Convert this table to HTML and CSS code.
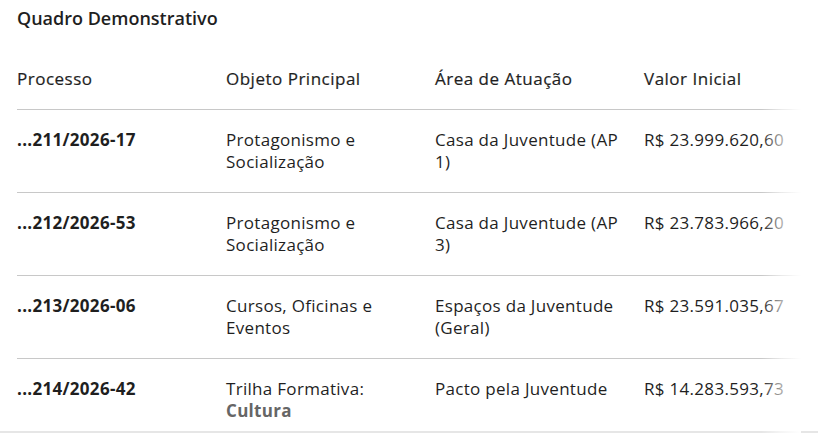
FILE: index.html
```html
<!DOCTYPE html>
<html lang="pt-BR">
<head>
<meta charset="UTF-8">
<title>Quadro Demonstrativo</title>
<link rel="stylesheet" href="styles.css">
</head>
<body>

<div class="page">
  <h3 class="title">Quadro Demonstrativo</h3>

  <div class="table-wrap">
    <table class="grid">
      <thead>
        <tr>
          <th class="c1">Processo</th>
          <th class="c2">Objeto Principal</th>
          <th class="c3">Área de Atuação</th>
          <th class="c4">Valor Inicial</th>
        </tr>
      </thead>
      <tbody>
        <tr>
          <td class="num">...211/2026-17</td>
          <td>Protagonismo e Socialização</td>
          <td>Casa da Juventude (AP 1)</td>
          <td>R$ 23.999.620,60</td>
        </tr>
        <tr>
          <td class="num">...212/2026-53</td>
          <td>Protagonismo e Socialização</td>
          <td>Casa da Juventude (AP 3)</td>
          <td>R$ 23.783.966,20</td>
        </tr>
        <tr>
          <td class="num">...213/2026-06</td>
          <td>Cursos, Oficinas e Eventos</td>
          <td>Espaços da Juventude (Geral)</td>
          <td>R$ 23.591.035,67</td>
        </tr>
        <tr>
          <td class="num">...214/2026-42</td>
          <td>Trilha Formativa: <b class="dim">Cultura</b></td>
          <td>Pacto pela Juventude</td>
          <td>R$ 14.283.593,73</td>
        </tr>
      </tbody>
    </table>
  </div>
</div>

</body>
</html>
```

FILE: styles.css
```css
* {
  box-sizing: border-box;
}

body {
  margin: 0;
  font-family: "Open Sans", "Noto Sans", sans-serif;
  color: #1f1f1f;
  background-color: #fff;
}

.page {
  padding: 7px 17px 0 17px;
  height: 433px;
  border-bottom: 2px solid #e6e6e6;
}

.title {
  margin: 0;
  font-size: 18px;
  font-weight: 600;
  line-height: 22px;
}

/* table with a fade on the right edge */
.table-wrap {
  position: relative;
  width: 784px;
  margin-top: 39px;
}

.table-wrap::after {
  content: "";
  position: absolute;
  top: 0;
  right: 0;
  bottom: 0;
  width: 40px;
  background: linear-gradient(to right, rgba(255,255,255,0), rgba(255,255,255,0.6) 50%, #fff);
}

.grid {
  width: 100%;
  border-collapse: collapse;
  table-layout: fixed;
  font-size: 17px;
  line-height: 22px;
  letter-spacing: 0.3px;
}

.grid th {
  text-align: left;
  font-weight: 500;
  letter-spacing: 0.5px;
  -webkit-text-stroke: 0.2px #1f1f1f;
  padding: 0 0 19px 0;
  border-bottom: 1px solid #c8c8c8;
}

.grid td {
  vertical-align: top;
  padding: 19px 12px 19px 0;
  border-bottom: 1px solid #c8c8c8;
}

.grid tbody tr:last-child td {
  border-bottom: none;
}

.c1, .c2, .c3 { width: 209px; }

.num {
  font-weight: 700;
}

.dim {
  color: #666;
}
```
